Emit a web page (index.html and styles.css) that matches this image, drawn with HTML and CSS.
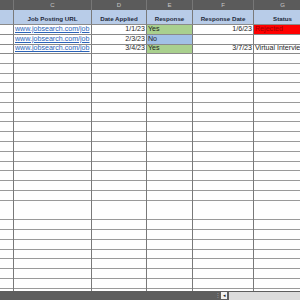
FILE: index.html
```html
<!DOCTYPE html>
<html>
<head>
<meta charset="utf-8">
<link rel="stylesheet" href="styles.css">
</head>
<body>
<div class="app">
  <div class="colheads">
    <div class="ch"></div>
    <div class="ch">C</div>
    <div class="ch">D</div>
    <div class="ch">E</div>
    <div class="ch">F</div>
    <div class="ch">G</div>
  </div>
  <div class="sheet">
    <div class="cell hd"></div>
    <div class="cell hd">Job Posting URL</div>
    <div class="cell hd">Date Applied</div>
    <div class="cell hd">Response</div>
    <div class="cell hd">Response Date</div>
    <div class="cell hd">Status</div>

    <div class="cell"></div>
    <div class="cell"><span class="link">www.jobsearch.com/job</span></div>
    <div class="cell num">1/1/23</div>
    <div class="cell yes">Yes</div>
    <div class="cell num">1/6/23</div>
    <div class="cell rej">Rejected</div>

    <div class="cell"></div>
    <div class="cell"><span class="link">www.jobsearch.com/job</span></div>
    <div class="cell num">2/3/23</div>
    <div class="cell no">No</div>
    <div class="cell num"></div>
    <div class="cell"></div>

    <div class="cell"></div>
    <div class="cell"><span class="link">www.jobsearch.com/job</span></div>
    <div class="cell num">3/4/23</div>
    <div class="cell yes">Yes</div>
    <div class="cell num">3/7/23</div>
    <div class="cell">Virtual Interview</div>

    <div class="filler"></div>
    <div class="filler"></div>
    <div class="filler"></div>
    <div class="filler"></div>
    <div class="filler"></div>
    <div class="filler"></div>
  </div>
  <div class="statusbar">
    <span class="grip">⁝</span>
    <span class="arrow">◂</span>
    <div class="hscroll"></div>
  </div>
</div>
</body>
</html>
```
FILE: styles.css
```css
html, body {
  margin: 0;
  padding: 0;
  background: #ffffff;
  overflow: hidden;
}
.app {
  width: 300px;
  height: 300px;
  display: flex;
  flex-direction: column;
  overflow: hidden;
  font-family: "Liberation Sans", Arial, sans-serif;
}
.colheads {
  display: grid;
  grid-template-columns: 14px 78px 55px 46px 61px 58px;
  height: 10px;
  background: #5b5b5b;
  flex: none;
}
.ch {
  border-right: 1px solid #777;
  color: #c8c8c8;
  font-size: 6px;
  line-height: 10px;
  text-align: center;
}
.sheet {
  flex: 1;
  display: grid;
  grid-template-columns: 14px 78px 55px 46px 61px 58px;
  grid-template-rows: 15px 9.8px 9.8px 9.8px 1fr;
  overflow: hidden;
  min-height: 0;
}
.cell {
  border-right: 1px solid #7a7a7a;
  border-bottom: 1px solid #8a8a8a;
  font-size: 7.1px;
  color: #1e1e1e;
  display: flex;
  align-items: center;
  padding: 0 1px;
  white-space: nowrap;
  overflow: hidden;
  line-height: 1;
}
.hd {
  background: #b8cce8;
  font-weight: bold;
  font-size: 6.2px;
  justify-content: center;
  align-items: flex-end;
  padding-bottom: 2px;
  color: #1e2a3a;
}
.link {
  color: #2b63b8;
  text-decoration: underline;
}
.num {
  justify-content: flex-end;
}
.yes {
  background: #a9d08e;
}
.no {
  background: #a2c1e6;
}
.rej {
  background: #ff0000;
  color: #a00000;
}
.filler {
  border-right: 1px solid #7a7a7a;
  background-image: repeating-linear-gradient(to bottom, transparent 0, transparent 8.8px, #9a9a9a 8.8px, #9a9a9a 9.78px);
}
.statusbar {
  flex: none;
  height: 9px;
  background: #5e5e5e;
  display: flex;
  align-items: center;
  padding-left: 217px;
  gap: 2px;
}
.grip {
  color: #aaa;
  font-size: 7px;
  line-height: 9px;
}
.arrow {
  width: 6px;
  height: 7px;
  background: #f0f0f0;
  color: #222;
  font-size: 5px;
  line-height: 7px;
  text-align: center;
}
.hscroll {
  flex: 1;
  height: 8px;
  background: #dcdcdc;
}
```
